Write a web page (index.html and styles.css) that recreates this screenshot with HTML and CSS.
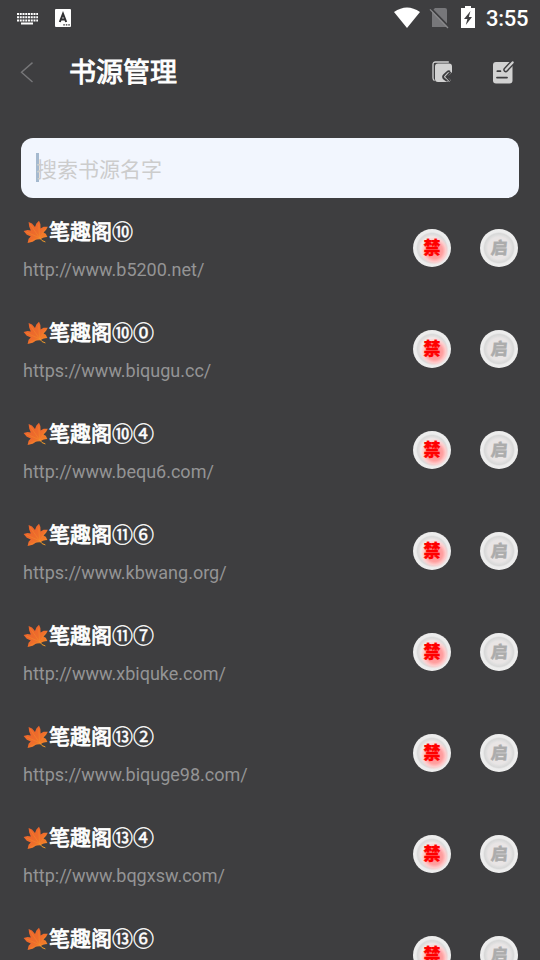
FILE: index.html
```
<!DOCTYPE html>
<html lang="zh-CN">
<head>
<meta charset="utf-8">
<title>书源管理</title>
<link rel="stylesheet" href="styles.css">
</head>
<body>
<svg class="defs" aria-hidden="true">
  <defs>
    <linearGradient id="leafFill" x1="0" y1="0" x2="1" y2="1"><stop offset="0" stop-color="#e8602b"/><stop offset=".55" stop-color="#ee6c2c"/><stop offset="1" stop-color="#f48a25"/></linearGradient>
    <symbol id="leaf" viewBox="0 0 26 24">
      <path fill="url(#leafFill)" d="M5.6 2 9 3.4 12 7 13.4 3.6 16 .8 17.4 4 17.6 8.4 20.6 6.8 24.8 6.8 23 10 20.4 12.4 22.8 13.8 24.4 17 20.5 17.4 17.6 19.2 13 19.6 9.8 21.8 4.6 23 5.6 18.8 7.8 16.4 3.8 14.8.6 11 4.6 10 7.8 10.6 6.2 6.5Z"/>
      <path fill="none" stroke="#f4862b" stroke-width=".6" d="M7 4 16.6 17.8M15.8 4.4 16.6 17.8M3 11.8 16.6 17.8M6.5 21.6 16.6 17.8M22.8 8.6 16.6 17.8M22.8 16.4 16.6 17.8"/>
      <path fill="none" stroke="#ef9a2b" stroke-width="1" stroke-linecap="round" d="M16.6 17.8Q18.6 21.4 22 21.9"/>
    </symbol>
  </defs>
</svg>
<div class="screen">
  <div class="status">
    <svg class="keyboard" width="21" height="12" viewBox="0 0 21 12"><path stroke="#fff" stroke-width="2" stroke-dasharray="2 .75" d="M0 1h21M0 4.2h21M0 7.4h21"/><path stroke="#fff" stroke-width="2" d="M4 10.5h12"/></svg>
    <svg class="letter" width="16" height="18" viewBox="0 0 16 18"><rect width="16" height="18" rx="1" fill="#fff"/><path fill="none" stroke="#303032" stroke-width="2" d="M4.8 13 8 4.8 11.2 13M6 10.4h4"/><path stroke="#303032" stroke-width="1.3" stroke-dasharray="1.5 1" d="M8.3 15.8h7"/></svg>
    <svg class="wifi" width="26" height="21" viewBox="0 0 26 21"><path fill="#fff" d="M0 5Q13-4 26 5L13 21Z"/></svg>
    <svg class="sim" width="20" height="22" viewBox="0 0 20 22"><path fill="#77777a" d="M6 1h10q2 0 2 2v17H3V4Z"/><path stroke="#3e3e40" stroke-width="2" d="M2 1.4 20 20"/><path stroke="#8a8a8c" stroke-width="1.3" d="M1 2.4 19 21"/></svg>
    <svg class="battery" width="14" height="22" viewBox="0 0 14 22"><path fill="#fff" d="M0 2h4V0h6v2h4v20H0Z"/><path fill="#3e3e40" d="M9.5 5 3 13h3.4L4.8 19 11 11H7.8Z"/></svg>
    <span class="clock">3:55</span>
  </div>
  <header class="bar">
    <svg class="back" width="14" height="21" viewBox="0 0 14 21"><path fill="none" stroke="#777779" stroke-width="1.4" d="M12.5.6 1.5 10.3l11 9.7"/></svg>
    <h1>书源管理</h1>
    <svg class="import" width="22" height="22" viewBox="0 0 22 22"><path fill="none" stroke="#d2d2d2" stroke-width="1.3" d="M16.8 1H3.5Q1 1 1 3.5V17q0 1.7 1.5 2.6"/><path fill="#d2d2d2" d="M6 2.6h11q3 0 3 3V12l-2.4-2L11 15.8l5 5.2H6q-3 0-3-3V5.600q0-3 3-3Z"/><path fill="none" stroke="#d2d2d2" stroke-width="2.600" d="m18 11.500-4.600 4.300 4.600 4.300"/><path fill="none" stroke="#3e3e40" stroke-width="1.700" d="m18.200 11.600-3.900 4.200 3.900 4M14 15.800h6.500M18 10.400q-1.500-.8-3 .6l-3 2.800q-2 2 0 4l3 2.200"/></svg>
    <svg class="edit" width="23" height="24" viewBox="0 0 23 24"><rect x="1" y="2" width="19.5" height="21.5" rx="3" fill="#d2d2d2"/><path stroke="#3e3e40" stroke-width="1.8" stroke-linecap="round" d="M5.4 11.200h3M5 17.600h10"/><path stroke="#3e3e40" stroke-width="5" stroke-linecap="round" d="m13.800 9.800 7-7.600"/><path stroke="#d2d2d2" stroke-width="2.200" stroke-linecap="round" d="m13.800 9.800 6.800-7.400"/></svg>
  </header>
  <div class="search"><span class="caret"></span><span class="hint">搜索书源名字</span></div>
  <main class="list">
    <section class="row"><div class="info"><h2><svg class="leaf"><use href="#leaf"/></svg>笔趣阁<i>⑩</i></h2><p>http://www.b5200.net/</p></div><div class="knob ban"><b>禁</b></div><div class="knob"><b>启</b></div></section>
    <section class="row"><div class="info"><h2><svg class="leaf"><use href="#leaf"/></svg>笔趣阁<i>⑩⓪</i></h2><p>https://www.biqugu.cc/</p></div><div class="knob ban"><b>禁</b></div><div class="knob"><b>启</b></div></section>
    <section class="row"><div class="info"><h2><svg class="leaf"><use href="#leaf"/></svg>笔趣阁<i>⑩④</i></h2><p>http://www.bequ6.com/</p></div><div class="knob ban"><b>禁</b></div><div class="knob"><b>启</b></div></section>
    <section class="row"><div class="info"><h2><svg class="leaf"><use href="#leaf"/></svg>笔趣阁<i>⑪⑥</i></h2><p>https://www.kbwang.org/</p></div><div class="knob ban"><b>禁</b></div><div class="knob"><b>启</b></div></section>
    <section class="row"><div class="info"><h2><svg class="leaf"><use href="#leaf"/></svg>笔趣阁<i>⑪⑦</i></h2><p>http://www.xbiquke.com/</p></div><div class="knob ban"><b>禁</b></div><div class="knob"><b>启</b></div></section>
    <section class="row"><div class="info"><h2><svg class="leaf"><use href="#leaf"/></svg>笔趣阁<i>⑬②</i></h2><p>https://www.biquge98.com/</p></div><div class="knob ban"><b>禁</b></div><div class="knob"><b>启</b></div></section>
    <section class="row"><div class="info"><h2><svg class="leaf"><use href="#leaf"/></svg>笔趣阁<i>⑬④</i></h2><p>http://www.bqgxsw.com/</p></div><div class="knob ban"><b>禁</b></div><div class="knob"><b>启</b></div></section>
    <section class="row"><div class="info"><h2><svg class="leaf"><use href="#leaf"/></svg>笔趣阁<i>⑬⑥</i></h2></div><div class="knob ban"><b>禁</b></div><div class="knob"><b>启</b></div></section>
  </main>
</div>
</body>
</html>
```
FILE: styles.css
```
* { box-sizing: border-box; margin: 0; padding: 0; }
body { background: #3e3e40; color: #fff; font-family: Roboto, "Noto Sans CJK SC", sans-serif; overflow: hidden; }
svg { display: block; flex: none; }
.defs { position: absolute; width: 0; height: 0; }
.screen { width: 540px; height: 960px; overflow: hidden; display: flex; flex-direction: column; }
.status { height: 36px; flex: none; display: flex; align-items: center; padding: 0 13px 0 17px; }
.keyboard { margin: 1px 17px 0 0; }
.wifi { margin: -2px 9px 0 auto; }
.sim { margin-right: 12px; }
.battery { margin: -2px 11px 0 0; }
.clock { font-size: 22px; font-weight: 500; line-height: 36px; width: 41px; padding-top: 2px; letter-spacing: -.3px; white-space: nowrap; }
.bar { height: 72px; flex: none; display: flex; align-items: center; padding: 0 25px 0 20px; }
h1 { font-size: 27px; font-weight: 400; -webkit-text-stroke: .9px #fff; line-height: 40px; margin: 2px auto 0 35px; }
.import { margin-right: 38px; }
.search { flex: none; margin: 30px 21px 0; height: 60px; border-radius: 12px; background: #f2f6fe; display: flex; align-items: center; padding-left: 15px; }
.caret { width: 3px; height: 29px; margin-top: -2px; background: #a5b9cf; }
.hint { font-size: 21px; color: #ccc; margin: 3px 0 0 -3px; line-height: 30px; }
.row { height: 101px; flex: none; display: flex; padding: 16px 22px 0 23px; }
.info { margin-right: auto; }
h2 { height: 36px; display: flex; align-items: center; font-size: 21px; font-weight: 400; -webkit-text-stroke: .8px #fff; line-height: 36px; }
h2 i { font-style: normal; -webkit-text-stroke-width: .4px; }
.leaf { width: 26px; height: 24px; }
.info p { font-size: 18px; line-height: 24px; margin-top: 8px; color: #949495; }
.knob { width: 38px; height: 38px; margin: 15px 0 0 29px; border-radius: 50%; display: flex; align-items: center; justify-content: center; background: radial-gradient(circle at 50% 50%, #e9e5e5 0 11px, #dedede 13px, #d8d8d8 14.5px, #ececec 16px, #f5f5f5 100%); }
.knob b { font-size: 17px; line-height: 20px; font-weight: 900; color: #acacac; -webkit-text-stroke: .3px #acacac; transform: skewX(-6deg); }
.ban { background: radial-gradient(circle at 57% 57%, #ff8c8c 0, #ffa0a0 8px, #ffcaca 11px, rgba(255,230,230,0) 14px), radial-gradient(circle, #f2e9e9 0 11px, #e2dede 13px, #dadada 14.5px, #ececec 16px, #f5f5f5 100%); }
.ban b { color: #f00; -webkit-text-stroke-color: #f00; transform: none; }
```
